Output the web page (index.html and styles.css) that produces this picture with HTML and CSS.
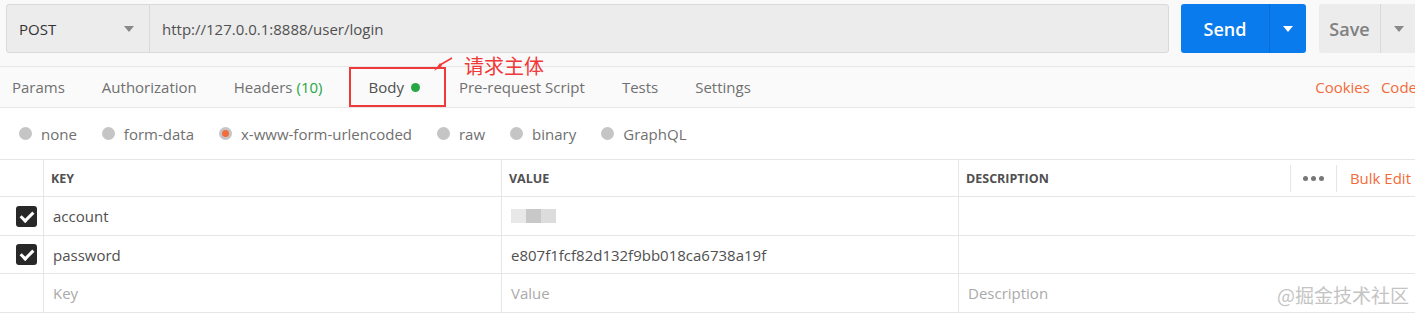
FILE: index.html
```html
<!DOCTYPE html>
<html lang="en">
<head>
  <meta charset="UTF-8">
  <title>Postman - Body</title>
  <link rel="stylesheet" href="styles.css">
</head>
<body>
  <div class="request-bar">
    <div class="url-box">
      <div class="method">
        <span>POST</span>
        <span class="caret caret-gray"></span>
      </div>
      <div class="url">http://127.0.0.1:8888/user/login</div>
    </div>
    <div class="split-btn send">
      <span class="label">Send</span>
      <span class="drop"><span class="caret caret-white"></span></span>
    </div>
    <div class="split-btn save">
      <span class="label">Save</span>
      <span class="drop"><span class="caret caret-gray"></span></span>
    </div>
  </div>

  <div class="tabs">
    <div class="tab-list">
      <span class="tab">Params</span>
      <span class="tab">Authorization</span>
      <span class="tab">Headers <span class="count">(10)</span></span>
      <span class="tab active">Body <span class="dot"></span></span>
      <span class="tab">Pre-request Script</span>
      <span class="tab">Tests</span>
      <span class="tab">Settings</span>
    </div>
    <div class="tab-links">
      <span>Cookies</span>
      <span>Code</span>
    </div>

    <!-- annotation -->
    <div class="note-box"></div>
    <svg class="note-arrow" width="24" height="16" viewBox="0 0 24 16">
      <path d="M2 14 L8 6 L10 9 Z" fill="#f03a3a"/>
      <path d="M8 8 L20 1" stroke="#f03a3a" stroke-width="1.5"/>
    </svg>
    <div class="note-text">请求主体</div>
  </div>

  <div class="body-types">
    <label class="radio"><span class="circle"></span>none</label>
    <label class="radio"><span class="circle"></span>form-data</label>
    <label class="radio"><span class="circle checked"></span>x-www-form-urlencoded</label>
    <label class="radio"><span class="circle"></span>raw</label>
    <label class="radio"><span class="circle"></span>binary</label>
    <label class="radio"><span class="circle"></span>GraphQL</label>
  </div>

  <div class="kv-table">
    <div class="row head">
      <div class="cell check"></div>
      <div class="cell">KEY</div>
      <div class="cell">VALUE</div>
      <div class="cell desc-head">
        <span>DESCRIPTION</span>
        <div class="head-tools">
          <span class="more"><i></i><i></i><i></i></span>
          <span class="bulk">Bulk Edit</span>
        </div>
      </div>
    </div>
    <div class="row">
      <div class="cell check"><span class="box"></span></div>
      <div class="cell">account</div>
      <div class="cell"><span class="blur"><i></i><i></i><i></i></span></div>
      <div class="cell"></div>
    </div>
    <div class="row short">
      <div class="cell check"><span class="box"></span></div>
      <div class="cell">password</div>
      <div class="cell">e807f1fcf82d132f9bb018ca6738a19f</div>
      <div class="cell"></div>
    </div>
    <div class="row placeholder">
      <div class="cell check"></div>
      <div class="cell">Key</div>
      <div class="cell">Value</div>
      <div class="cell">Description</div>
    </div>
  </div>

  <div class="watermark">@掘金技术社区</div>
</body>
</html>
```

FILE: styles.css
```css
* {
  box-sizing: border-box;
  margin: 0;
  padding: 0;
}

body {
  width: 1415px;
  height: 314px;
  overflow: hidden;
  background: #fff;
  color: #505050;
  font-family: 'Open Sans', 'Noto Sans CJK SC', sans-serif;
  font-size: 15px;
  position: relative;
}

/* request bar */
.request-bar {
  display: flex;
  height: 67px;
  padding: 4px 0 0 6px;
  background: #f9f9f9;
  border-bottom: 1px solid #e6e6e6;
}

.url-box {
  display: flex;
  flex-shrink: 0;
  width: 1163px;
  height: 49px;
  background: #ececec;
  border: 1px solid #d9d9d9;
  border-radius: 3px;
}

.method {
  width: 143px;
  display: flex;
  align-items: center;
  justify-content: space-between;
  padding: 0 15px 0 12px;
  border-right: 1px solid #d9d9d9;
  color: #333;
}

.url {
  display: flex;
  align-items: center;
  padding-left: 12px;
  color: #505050;
}

.caret {
  width: 0;
  height: 0;
  border-left: 5px solid transparent;
  border-right: 5px solid transparent;
  border-top: 6px solid #888;
}

.caret-white {
  border-top-color: #fff;
}

.split-btn {
  display: flex;
  flex-shrink: 0;
  height: 49px;
  border-radius: 3px;
  font-size: 18px;
  font-weight: 600;
}

.split-btn .label {
  display: flex;
  align-items: center;
  justify-content: center;
}

.split-btn .drop {
  display: flex;
  align-items: center;
  justify-content: center;
}

.send {
  margin-left: 12px;
  width: 125px;
  background: #097bed;
  color: #fff;
}

.send .label {
  width: 88px;
}

.send .drop {
  width: 37px;
  border-left: 1px solid #0a6bd0;
}

.save {
  margin-left: 13px;
  width: 110px;
  background: #ececec;
  color: #808080;
}

.save .label {
  width: 61px;
}

.save .drop {
  width: 36px;
  border-left: 1px solid #d9d9d9;
}

/* tabs */
.tabs {
  position: relative;
  display: flex;
  justify-content: space-between;
  align-items: center;
  height: 41px;
  background: #fafafa;
  border-bottom: 1px solid #e6e6e6;
  padding-left: 12px;
  line-height: 18px;
}

.tab-list {
  display: flex;
  gap: 37px;
}

.tab {
  color: #707070;
  display: flex;
  align-items: center;
}

.tab .count {
  color: #26a645;
  margin-left: 4px;
}

.tab.active {
  color: #505050;
  margin: 0 2px 0 9px;
}

.tab .dot {
  width: 9px;
  height: 9px;
  border-radius: 50%;
  background: #26a645;
  margin-left: 7px;
}

.tab-links {
  display: flex;
  gap: 11px;
  color: #f26b3a;
  margin-right: -2px;
}

.note-box {
  position: absolute;
  left: 349px;
  top: 0;
  width: 97px;
  height: 40px;
  border: 2px solid #f03a3a;
}

.note-arrow {
  position: absolute;
  left: 432px;
  top: -10px;
}

.note-text {
  position: absolute;
  left: 464px;
  top: -11px;
  font-size: 20px;
  line-height: 1;
  color: #f03a3a;
  font-family: 'Noto Sans CJK SC', sans-serif;
}

/* body types */
.body-types {
  display: flex;
  align-items: center;
  height: 52px;
  padding-left: 19px;
  gap: 25px;
  border-bottom: 1px solid #e6e6e6;
}

.radio {
  display: flex;
  align-items: center;
  gap: 9px;
  color: #707070;
}

.circle {
  width: 13px;
  height: 13px;
  border-radius: 50%;
  background: #c5c5c5;
  display: flex;
  align-items: center;
  justify-content: center;
}

.circle.checked::after {
  content: '';
  width: 7px;
  height: 7px;
  border-radius: 50%;
  background: #f26b3a;
}

/* key/value table */
.row {
  display: grid;
  grid-template-columns: 43px 458px 457px 457px;
  height: 39px;
  border-bottom: 1px solid #e6e6e6;
}

.row.head {
  height: 37px;
}

.row.short {
  height: 38px;
}

.cell {
  display: flex;
  align-items: center;
  padding-left: 9px;
  border-left: 1px solid #e6e6e6;
  color: #505050;
}

.cell.check {
  border-left: none;
  padding-left: 16px;
}

.head .cell {
  font-size: 12.5px;
  font-weight: 700;
  padding-left: 7px;
}

.desc-head {
  justify-content: space-between;
}

.head-tools {
  display: flex;
  align-items: center;
  height: 100%;
}

.more {
  display: flex;
  gap: 3px;
  height: 27px;
  align-items: center;
  padding: 0 12px;
  border-left: 1px solid #e6e6e6;
  border-right: 1px solid #e6e6e6;
}

.more i {
  width: 5px;
  height: 5px;
  border-radius: 50%;
  background: #777;
}

.bulk {
  color: #f26b3a;
  font-weight: 400;
  font-size: 15px;
  margin-left: 13px;
  margin-right: 4px;
}

.box {
  width: 21px;
  height: 21px;
  border-radius: 3px;
  background: #282828;
  position: relative;
}

.box::after {
  content: '';
  position: absolute;
  left: 7px;
  top: 3px;
  width: 5px;
  height: 10px;
  border: solid #fff;
  border-width: 0 3px 3px 0;
  transform: rotate(45deg);
}

.blur {
  display: flex;
  height: 14px;
}

.blur i {
  width: 15px;
  background: #dcdcdc;
}

.blur i:nth-child(2) {
  background: #c8c8c8;
}

.blur i:first-child {
  background: #e8e8e8;
}

.placeholder .cell {
  color: #aaa;
}

.watermark {
  position: absolute;
  left: 1277px;
  top: 281px;
  font-size: 19px;
  color: #c4c4c4;
  font-family: 'Noto Sans CJK SC', sans-serif;
}
```
